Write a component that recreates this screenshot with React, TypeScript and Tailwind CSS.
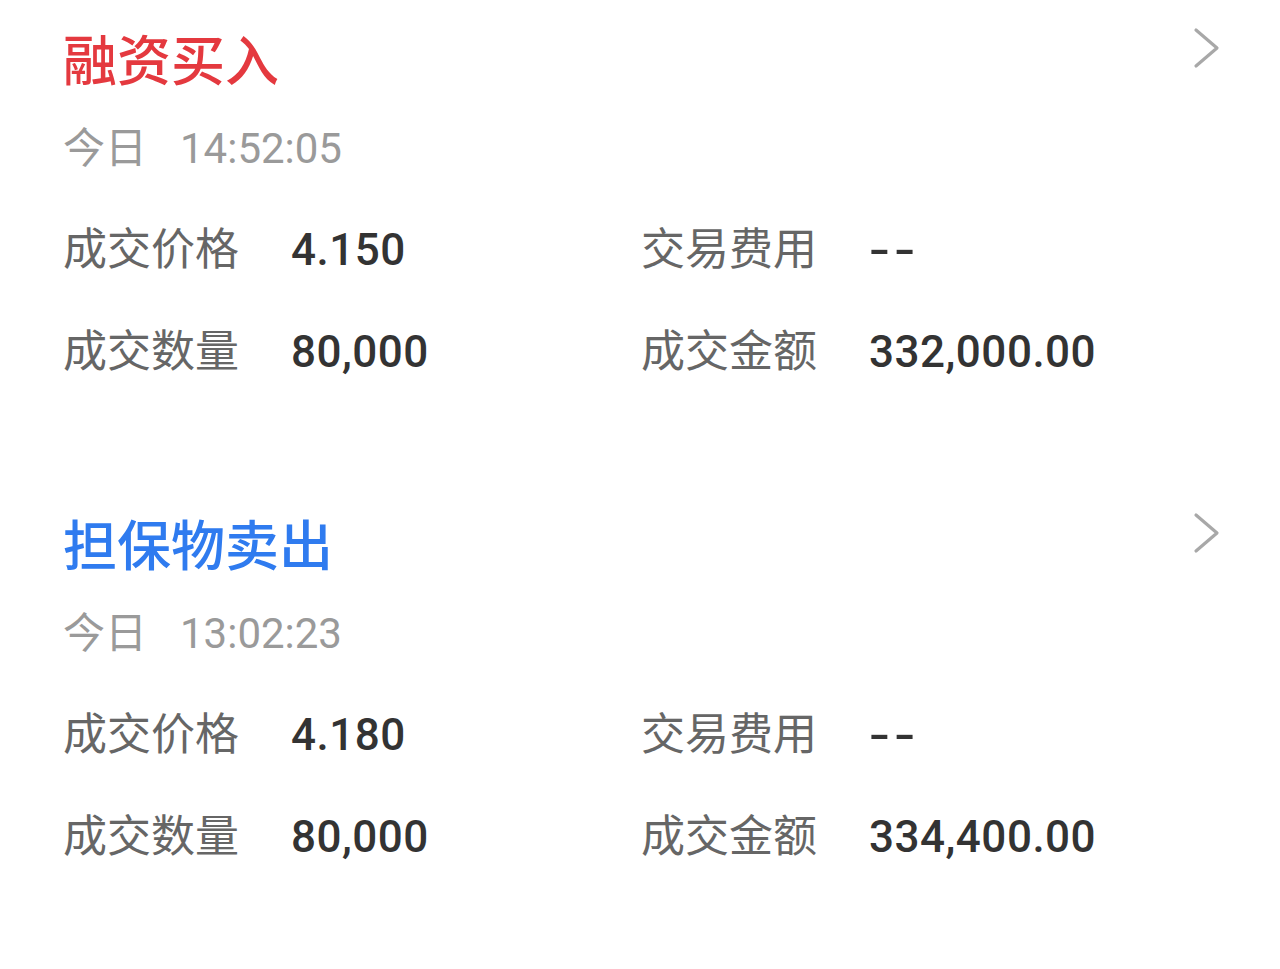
const trades = [
  {
    type: "融资买入",
    color: "text-[#e4393f]",
    time: "14:52:05",
    price: "4.150",
    qty: "80,000",
    amount: "332,000.00",
  },
  {
    type: "担保物卖出",
    color: "text-[#2f7bef]",
    time: "13:02:23",
    price: "4.180",
    qty: "80,000",
    amount: "334,400.00",
  },
];

const font = "font-['Roboto','Noto_Sans_CJK_SC',sans-serif]";

function Chevron() {
  return (
    <svg width="30" height="44" viewBox="0 0 30 44" fill="none" className="shrink-0">
      <polyline
        points="4,4 25,22 4,40"
        stroke="#a8a8a8"
        strokeWidth="3.2"
        strokeLinecap="round"
        strokeLinejoin="round"
      />
    </svg>
  );
}

function Cell({ label, value }: { label: string; value: string }) {
  const dash = value === "--";
  return (
    <div className="flex items-center">
      <span className="w-[228px] text-[44px] leading-none text-[#666666]">{label}</span>
      <span
        className={`inline-block text-[44px] leading-none font-medium text-[#333333] ${
          dash ? "origin-left scale-x-[1.4] tracking-[3px]" : "tracking-[0.5px]"
        }`}
      >
        {value}
      </span>
    </div>
  );
}

function TradeCard({ t }: { t: (typeof trades)[number] }) {
  return (
    <div className="h-[485px] pt-[31px] pl-[63px] pr-[58px]">
      <div className="flex h-[64px] justify-between">
        <h2 className={`text-[54px] leading-[64px] font-medium ${t.color}`}>{t.type}</h2>
        <div className="-mt-[5px]">
          <Chevron />
        </div>
      </div>
      <div className="mt-[28px] flex h-[50px] items-center text-[42px] text-[#9a9a9a]">
        <span className="w-[117px]">今日</span>
        <span>{t.time}</span>
      </div>
      <div className="mt-[26px] grid grid-cols-[578px_1fr]">
        <div className="flex h-[102px] items-center">
          <Cell label="成交价格" value={t.price} />
        </div>
        <div className="flex h-[102px] items-center">
          <Cell label="交易费用" value="--" />
        </div>
        <div className="flex h-[102px] items-center">
          <Cell label="成交数量" value={t.qty} />
        </div>
        <div className="flex h-[102px] items-center">
          <Cell label="成交金额" value={t.amount} />
        </div>
      </div>
    </div>
  );
}

export default function App() {
  return (
    <div className={`min-h-[969px] w-[1280px] bg-white ${font}`}>
      {trades.map((t) => (
        <TradeCard key={t.type} t={t} />
      ))}
    </div>
  );
}
